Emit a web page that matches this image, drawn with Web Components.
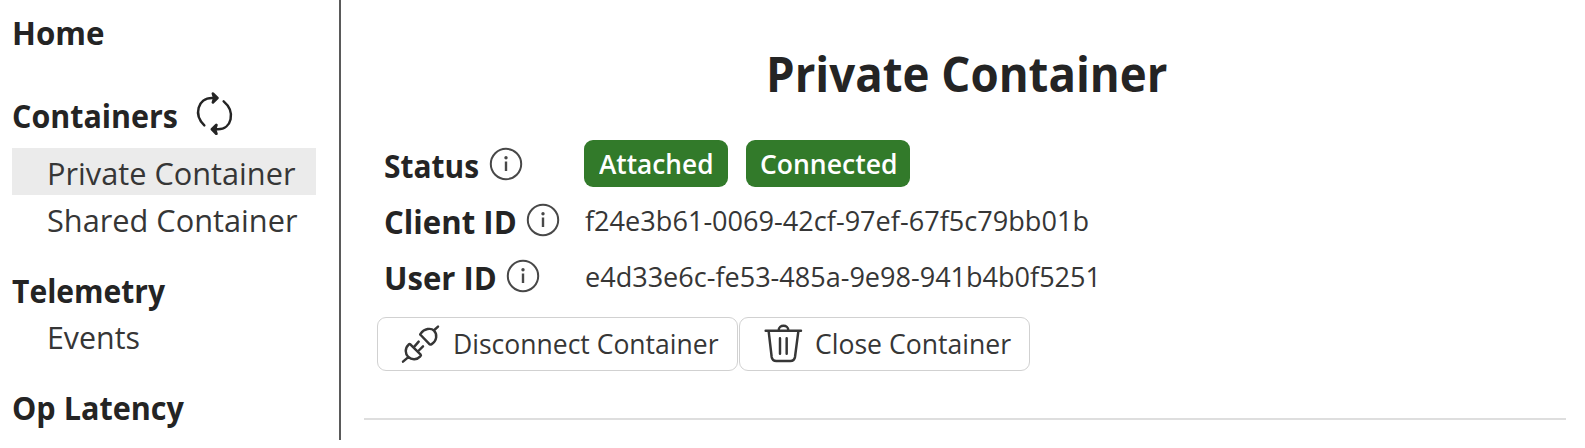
<!DOCTYPE html>
<html lang="en"><head><meta charset="utf-8"><title>Devtools</title>
<style>html,body{margin:0;background:#fff}body{font-family:"Open Sans","Noto Sans",sans-serif;color:#242424;overflow:hidden}</style></head>
<body><devtools-app></devtools-app>
<script>
const define=(name,html,init)=>customElements.define(name,class extends HTMLElement{
  connectedCallback(){
    if(this.shadowRoot)return;
    const t=document.createElement('template');t.innerHTML=html;
    this.attachShadow({mode:'open'}).append(t.content.cloneNode(true));
    if(init)init(this,this.shadowRoot);
  }
});
// A label condensed or widened to the advance given in its w attribute.
define('fit-text',`<style>:host{display:inline-block;white-space:nowrap;flex:none}span{display:inline-block;transform-origin:0 50%}</style><span><slot></slot></span>`,(el,root)=>{
  const s=root.querySelector('span'),w=+el.getAttribute('w');
  s.style.transform='scaleX('+w/s.getBoundingClientRect().width+')';
  el.style.width=w+'px';
});
const icons={
 sync:'<path d="M43 121C10 90 23 39 66 39H80M101 49C138 80 125 133 84 133H68"/><path stroke-width="8.5" fill="currentColor" d="M69 26L82 39L69 52L73 39ZM79 120L66 133L79 146L75 133Z"/>',
 plug:'<path d="M77 53C88 37 108 35 117 44C127 54 127 74 109 85Q105 87 102 83L77 57Q74 55 77 53ZM118 42L129 32M46 85L77 116Q79 119 76 121C66 132 50 132 40 123C30 113 29 97 41 86Q43 83 46 85ZM58 92L71 77M70 105L84 91M39 124L24 137"/>',
 trash:'<path d="M29 44H135M68 43C68 25 97 25 97 43M38 46L47 123Q49 135 61 135H103Q115 135 117 123L127 46M72 67V113M92 67V113"/>'
};
define('app-icon',`<style>:host{display:block;width:50px;height:50px;flex:none}svg{display:block}</style><svg width="50" height="50" viewBox="0 0 150 150" fill="none" stroke="currentColor" stroke-width="7.4" stroke-linecap="round" stroke-linejoin="round"></svg>`,(el,root)=>{root.querySelector('svg').innerHTML=icons[el.getAttribute('name')]});
define('info-icon',`<style>:host{display:block;width:34px;height:34px;flex:none;color:#484848}svg{display:block}</style><svg width="34" height="34" viewBox="0 0 34 34"><circle cx="17" cy="17" r="15.2" fill="none" stroke="currentColor" stroke-width="2"/><circle cx="17" cy="10.8" r="1.7" fill="currentColor"/><path d="M17 14.5v9.5" stroke="currentColor" stroke-width="2.4"/></svg>`);
define('nav-heading',`<style>:host{display:flex;align-items:center;height:47px;font-size:31.5px;font-weight:700;line-height:47px}::slotted(app-icon){margin:-10px 0 0 12px}</style><slot></slot>`);
define('nav-item',`<style>:host{display:block;box-sizing:border-box;height:47px;padding-left:35px;width:304px;font-size:31.5px;line-height:47px;color:#363636}:host([selected]){background:#ebebeb;height:46.5px;line-height:49.5px}</style><slot></slot>`);
define('side-nav',`<style>:host{display:block;box-sizing:border-box;width:341.3px;height:440px;padding:9px 0 0 12px;border-right:2px solid #5a5a5a;flex:none}
.c{margin-top:35.5px}.l{margin-top:9.5px}.s{margin-top:1.5px}.t{margin-top:23.5px}.e{margin-top:-1px}.o{margin-top:24px}</style>
<nav-heading><fit-text w="92.5">Home</fit-text></nav-heading>
<nav-heading class="c"><fit-text w="166">Containers</fit-text><app-icon name="sync"></app-icon></nav-heading>
<nav-item class="l" selected><fit-text w="248.5">Private Container</fit-text></nav-item>
<nav-item class="s"><fit-text w="250.5">Shared Container</fit-text></nav-item>
<nav-heading class="t"><fit-text w="153">Telemetry</fit-text></nav-heading>
<nav-item class="e"><fit-text w="93">Events</fit-text></nav-item>
<nav-heading class="o"><fit-text w="172">Op Latency</fit-text></nav-heading>`);
define('status-badge',`<style>:host{display:flex;align-items:center;justify-content:center;box-sizing:border-box;height:47px;margin-top:-.4px;border-radius:9px;background:#327a2a;color:#fff;font-size:27.5px;font-weight:600;line-height:47px}</style><slot></slot>`);
define('data-row',`<style>:host{display:grid;grid-template-columns:201px auto;height:56px;align-items:center;justify-content:start}.k{display:flex;align-items:center;gap:10px;padding-left:.4px;font-size:31.5px;font-weight:700;line-height:47px;padding-top:2px}info-icon{margin-top:-2.5px}.v{display:flex;gap:18.5px;font-size:27.5px;color:#363636;line-height:47px}::slotted(fit-text:not([slot])){margin-left:.8px}</style>
<div class="k"><slot name="label"></slot><info-icon></info-icon></div><div class="v"><slot></slot></div>`);
define('action-button',`<style>:host{display:flex;align-items:center;box-sizing:border-box;height:54.5px;border:1.5px solid #d1d1d1;border-radius:9px;font-size:27.5px;line-height:47px;color:#363636;padding-left:16.6px}::slotted(app-icon){margin-top:-5.5px}::slotted(fit-text){margin-left:8.4px}</style><slot></slot>`);
define('container-view',`<style>:host{display:block;flex:1;padding:0 19.5px 0 23px;min-width:0}h1{margin:0;padding:40px 0 0 3px;height:96px;box-sizing:border-box;text-align:center;font-size:49px;line-height:66px;font-weight:700}
.d{padding:40px 0 0 19px}.b{display:flex;gap:1px;margin:12.5px 0 0 12.8px}.b app-icon[name=trash]{margin-left:-1.2px;margin-right:1.2px}hr{margin:46.5px 0 0;border:0;height:2px;background:#dedede}</style>
<h1><fit-text w="401.5">Private Container</fit-text></h1>
<div class="d">
<data-row><fit-text slot="label" w="95">Status</fit-text><status-badge style="width:143.5px"><fit-text w="114.5">Attached</fit-text></status-badge><status-badge style="width:164px"><fit-text w="137.5">Connected</fit-text></status-badge></data-row>
<data-row><fit-text slot="label" w="132.7">Client ID</fit-text><fit-text w="504">f24e3b61-0069-42cf-97ef-67f5c79bb01b</fit-text></data-row>
<data-row><fit-text slot="label" w="112.7">User ID</fit-text><fit-text w="516">e4d33e6c-fe53-485a-9e98-941b4b0f5251</fit-text></data-row>
</div>
<div class="b"><action-button style="width:361px"><app-icon name="plug"></app-icon><fit-text w="265.5">Disconnect Container</fit-text></action-button><action-button style="width:291px"><app-icon name="trash"></app-icon><fit-text w="196">Close Container</fit-text></action-button></div>
<hr>`);
define('devtools-app',`<style>:host{display:flex;width:1585px;height:448px;overflow:hidden}</style><side-nav></side-nav><container-view></container-view>`);
</script></body></html>
